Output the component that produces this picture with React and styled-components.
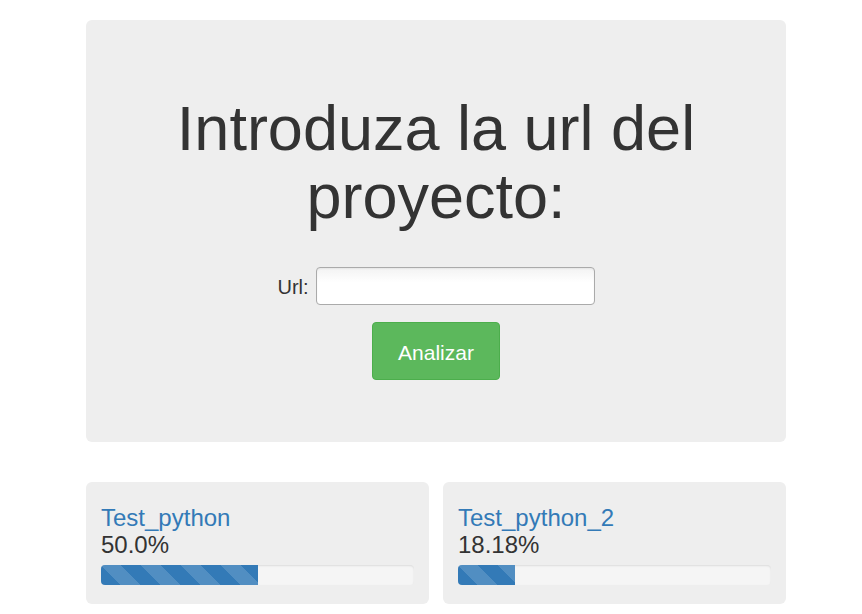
import React from 'react';
import styled, { createGlobalStyle } from 'styled-components';

const GlobalStyle = createGlobalStyle`
  body {
    margin: 0;
    background: #fff;
    font-family: "Liberation Sans", Arial, Helvetica, sans-serif;
    color: #333;
  }
`;

const Page = styled.div`
  width: 700px;
  padding: 20px 0 0 86px;
`;

const Jumbotron = styled.section`
  background: #eee;
  border-radius: 6px;
  padding: 75px 60px 62px;
  display: flex;
  flex-direction: column;
  align-items: center;
`;

const Title = styled.h1`
  margin: 0 0 37px;
  font-size: 63px;
  line-height: 67.5px;
  font-weight: 400;
  text-align: center;
  color: #333;
`;

const FormRow = styled.form`
  display: flex;
  flex-direction: column;
  align-items: center;
  gap: 17px;
`;

const Field = styled.div`
  display: flex;
  align-items: center;
  gap: 7px;
`;

const Label = styled.label`
  font-size: 20px;
  color: #333;
  padding-top: 3px;
`;

const UrlInput = styled.input`
  width: 279px;
  height: 38px;
  box-sizing: border-box;
  border: 1px solid #aaa;
  border-radius: 4px;
  background: linear-gradient(#f3f3f3, #fff 40%);
  box-shadow: inset 0 1px 2px rgba(0, 0, 0, 0.06);
  font-size: 16px;
  padding: 0 8px;
  outline: none;
`;

const Button = styled.button`
  width: 128px;
  height: 58px;
  padding: 4px 0 0;
  border: 1px solid #4cae4c;
  border-radius: 4px;
  background: #5cb85c;
  color: #fff;
  font-family: inherit;
  font-size: 21px;
  cursor: pointer;
`;

const Cards = styled.div`
  display: grid;
  grid-template-columns: 1fr 1fr;
  gap: 14px;
  margin-top: 40px;
`;

const Card = styled.div`
  background: #eee;
  border-radius: 6px;
  padding: 22px 15px 19px;
`;

const ProjectLink = styled.a`
  display: block;
  font-size: 24px;
  line-height: 27px;
  color: #337ab7;
  text-decoration: none;
`;

const Percent = styled.div`
  font-size: 24px;
  line-height: 27px;
  color: #333;
`;

const Progress = styled.div`
  margin-top: 7px;
  height: 20px;
  background: #f5f5f5;
  border-radius: 4px;
  box-shadow: inset 0 1px 2px rgba(0, 0, 0, 0.1);
  overflow: hidden;
`;

const Bar = styled.div`
  height: 100%;
  background-color: #337ab7;
  background-image: linear-gradient(
    45deg,
    rgba(255, 255, 255, 0.15) 25%,
    transparent 25%,
    transparent 50%,
    rgba(255, 255, 255, 0.15) 50%,
    rgba(255, 255, 255, 0.15) 75%,
    transparent 75%,
    transparent
  );
  background-size: 40px 40px;
`;

const projects = [
  { name: 'Test_python', value: 50.0, label: '50.0%' },
  { name: 'Test_python_2', value: 18.18, label: '18.18%' },
];

const App = () => (
  <>
    <GlobalStyle />
    <Page>
      <Jumbotron>
        <Title>Introduza la url del proyecto:</Title>
        <FormRow onSubmit={(e) => e.preventDefault()}>
          <Field>
            <Label htmlFor="url-input">Url:</Label>
            <UrlInput id="url-input" type="text" />
          </Field>
          <Button type="submit">Analizar</Button>
        </FormRow>
      </Jumbotron>
      <Cards>
        {projects.map((p) => (
          <Card key={p.name}>
            <ProjectLink href="#">{p.name}</ProjectLink>
            <Percent>{p.label}</Percent>
            <Progress>
              <Bar style={{ width: `${p.value}%` }} />
            </Progress>
          </Card>
        ))}
      </Cards>
    </Page>
  </>
);

export default App;
